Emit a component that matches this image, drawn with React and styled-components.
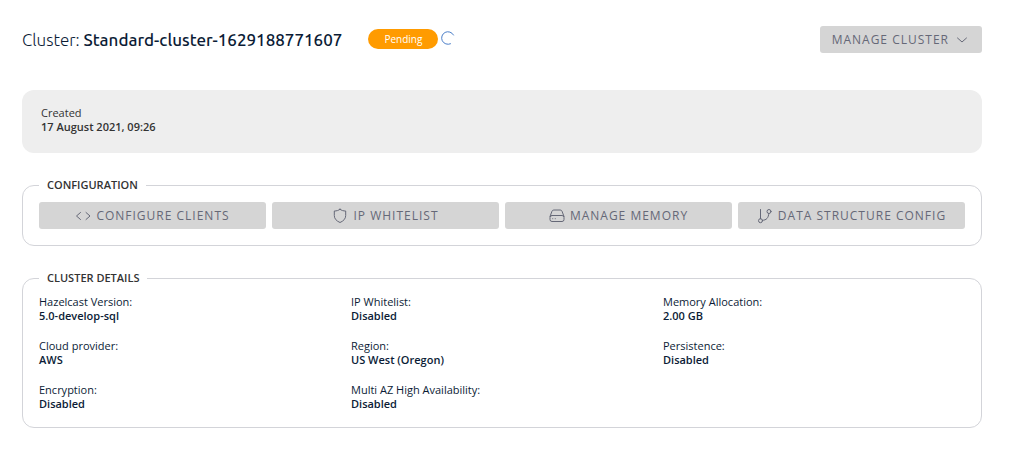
import React from 'react';
import styled, { createGlobalStyle } from 'styled-components';

const GlobalStyle = createGlobalStyle`
  * { box-sizing: border-box; }
  body {
    margin: 0;
    background: #fff;
    color: #0b1c36;
    font: 11px/14px "Open Sans", "Noto Sans", sans-serif;
  }
`;

const Page = styled.main`
  display: flex;
  flex-direction: column;
  gap: 24px;
  padding: 26px 27px 26px 22px;
`;

const Header = styled.header`
  display: flex;
  align-items: center;
  margin-bottom: 13px;
`;

const Title = styled.h1`
  margin: 0 26px 0 0;
  font: 300 17px/27px Ubuntu, "Noto Sans", sans-serif;
  strong { font-weight: 500; }
`;

const Status = styled.span`
  width: 70px;
  margin-bottom: 2px;
  border-radius: 10px;
  background: #ff9b00;
  color: #fff;
  font-size: 10px;
  line-height: 20px;
  text-align: center;
`;

const Icon = styled.svg`
  flex: none;
  width: 16px;
  height: 16px;
  fill: none;
  stroke: currentColor;
  stroke-width: 1;
  stroke-linecap: round;
  stroke-linejoin: round;
`;

const Spinner = styled(Icon)`
  margin: 0 0 4px 2px;
  color: #4c7fc9;
`;

const Button = styled.button`
  display: flex;
  align-items: center;
  justify-content: center;
  gap: 5px;
  height: 27px;
  padding: 0 12px;
  border: 0;
  border-radius: 3px;
  background: #d5d5d5;
  color: #656877;
  font: 12px/16px "Open Sans", "Noto Sans", sans-serif;
  letter-spacing: 1px;
  text-transform: uppercase;
  white-space: nowrap;
`;

const MenuButton = styled(Button)`
  margin-left: auto;
`;

const Summary = styled.section`
  padding: 16px 19px 19px;
  border-radius: 12px;
  background: #eee;
  color: #333;
`;

const Panel = styled.fieldset`
  min-width: 0;
  margin: 0;
  padding: 9px 16px 16px;
  border: 1px solid #d3d4d9;
  border-radius: 12px;
`;

const Legend = styled.legend`
  padding: 0 8px;
  color: #333;
  font-weight: 600;
  line-height: 16px;
  text-transform: uppercase;
`;

const Actions = styled.div`
  display: grid;
  grid-template-columns: repeat(4, 1fr);
  gap: 6px;
`;

const Details = styled.dl`
  display: grid;
  grid-template-columns: repeat(3, 1fr);
  gap: 16px 10px;
  margin: 0;
`;

const Term = styled.dt`
  font-weight: 400;
`;

const Value = styled.dd`
  margin: 0;
  font-weight: 600;
`;

const details = [
  ['Hazelcast Version:', '5.0-develop-sql'],
  ['IP Whitelist:', 'Disabled'],
  ['Memory Allocation:', '2.00 GB'],
  ['Cloud provider:', 'AWS'],
  ['Region:', 'US West (Oregon)'],
  ['Persistence:', 'Disabled'],
  ['Encryption:', 'Disabled'],
  ['Multi AZ High Availability:', 'Disabled'],
];

const actions = [
  ['Configure Clients', <path d="m5.500 4.500-4 3.500 4 3.500M11 4.500l4 3.500-4 3.500" />],
  ['IP Whitelist', <path d="M8 1.300C6.500 2.500 4.500 3 2.300 3v4.500c0 3.300 2.200 5.500 5.700 7 3.500-1.500 5.700-3.700 5.700-7V3C11.500 3 9.500 2.500 8 1.300Z" />],
  ['Manage Memory', (
    <>
      <path d="M1 8.500 3 3.200Q3.600 2 4.800 2h6.400q1.200 0 1.800 1.200L15 8.500" />
      <rect x="1" y="7.500" width="14" height="6" rx="2" />
      <path d="M3.700 10.700h.1M6.200 10.700h.1" />
    </>
  )],
  ['Data Structure Config', (
    <>
      <path d="M3.500 1.500v9.300M5.500 12.300c4 0 6-2.500 6.300-6.800" />
      <circle cx="3.500" cy="12.700" r="2" />
      <circle cx="12" cy="3.500" r="2" />
    </>
  )],
];

export default function App() {
  return (
    <>
      <GlobalStyle />
      <Page>
        <Header>
          <Title>Cluster: <strong>Standard-cluster-1629188771607</strong></Title>
          <Status>Pending</Status>
          <Spinner viewBox="0 0 16 16" role="img" aria-label="Loading">
            <path d="M13.500 5A6.300 6.300 0 1 0 10.500 13.800" />
          </Spinner>
          <MenuButton type="button" aria-haspopup="menu">
            Manage Cluster
            <Icon viewBox="0 0 16 16" aria-hidden="true"><path d="m3.500 6 4.500 4 4.500-4" /></Icon>
          </MenuButton>
        </Header>
        <Summary>
          <div>Created</div>
          <Value as="div">17 August 2021, 09:26</Value>
        </Summary>
        <Panel>
          <Legend>Configuration</Legend>
          <Actions>
            {actions.map(([label, drawing]) => (
              <Button type="button" key={label}>
                <Icon viewBox="0 0 16 16" aria-hidden="true">{drawing}</Icon>
                {label}
              </Button>
            ))}
          </Actions>
        </Panel>
        <Panel>
          <Legend>Cluster Details</Legend>
          <Details>
            {details.map(([term, value]) => (
              <div key={term}>
                <Term>{term}</Term>
                <Value>{value}</Value>
              </div>
            ))}
          </Details>
        </Panel>
      </Page>
    </>
  );
}
